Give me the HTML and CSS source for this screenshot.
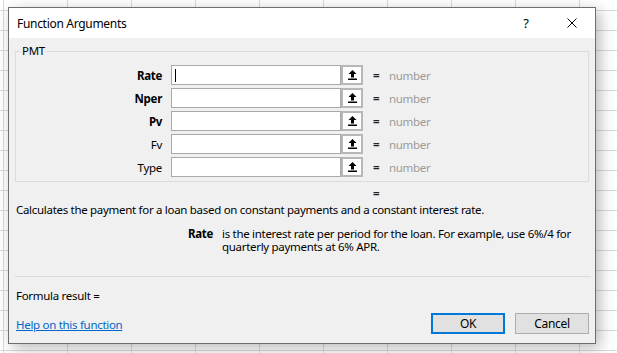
FILE: index.html
```html
<!DOCTYPE html>
<html>
<head>
<meta charset="utf-8">
<title>Function Arguments</title>
<link rel="stylesheet" href="styles.css">
</head>
<body>
<div class="dialog">
  <div class="titlebar">
    <span class="title">Function Arguments</span>
    <span class="tb-btn help">?</span>
    <span class="tb-btn close">
      <svg width="10" height="10" viewBox="0 0 10 10"><path d="M0.5 0.5L9.5 9.5M9.5 0.5L0.5 9.5" stroke="#000" stroke-width="1" fill="none"/></svg>
    </span>
  </div>
  <div class="body">
    <div class="group">
      <span class="legend">PMT</span>
      <div class="row">
        <span class="label bold">Rate</span>
        <span class="input"><span class="caret"></span></span>
        <span class="refbtn"><svg width="9" height="10" viewBox="0 0 9 10"><path d="M4.5 0L8.5 4H6V7.5H3V4H0.5Z" fill="#000"/><rect x="0" y="8.5" width="9" height="1.5" fill="#000"/></svg></span>
        <span class="eq">=</span>
        <span class="val">number</span>
      </div>
      <div class="row">
        <span class="label bold">Nper</span>
        <span class="input"></span>
        <span class="refbtn"><svg width="9" height="10" viewBox="0 0 9 10"><path d="M4.5 0L8.5 4H6V7.5H3V4H0.5Z" fill="#000"/><rect x="0" y="8.5" width="9" height="1.5" fill="#000"/></svg></span>
        <span class="eq">=</span>
        <span class="val">number</span>
      </div>
      <div class="row">
        <span class="label bold">Pv</span>
        <span class="input"></span>
        <span class="refbtn"><svg width="9" height="10" viewBox="0 0 9 10"><path d="M4.5 0L8.5 4H6V7.5H3V4H0.5Z" fill="#000"/><rect x="0" y="8.5" width="9" height="1.5" fill="#000"/></svg></span>
        <span class="eq">=</span>
        <span class="val">number</span>
      </div>
      <div class="row">
        <span class="label">Fv</span>
        <span class="input"></span>
        <span class="refbtn"><svg width="9" height="10" viewBox="0 0 9 10"><path d="M4.5 0L8.5 4H6V7.5H3V4H0.5Z" fill="#000"/><rect x="0" y="8.5" width="9" height="1.5" fill="#000"/></svg></span>
        <span class="eq">=</span>
        <span class="val">number</span>
      </div>
      <div class="row">
        <span class="label">Type</span>
        <span class="input"></span>
        <span class="refbtn"><svg width="9" height="10" viewBox="0 0 9 10"><path d="M4.5 0L8.5 4H6V7.5H3V4H0.5Z" fill="#000"/><rect x="0" y="8.5" width="9" height="1.5" fill="#000"/></svg></span>
        <span class="eq">=</span>
        <span class="val">number</span>
      </div>
    </div>
    <div class="result-eq">=</div>
    <div class="desc">Calculates the payment for a loan based on constant payments and a constant interest rate.</div>
    <div class="argdesc">
      <span class="argname">Rate</span>
      <span class="argtext">is the interest rate per period for the loan. For example, use 6%/4 for<br>quarterly payments at 6% APR.</span>
    </div>
    <div class="sep"></div>
    <div class="formula">Formula result =</div>
    <div class="footer">
      <a class="link" href="#">Help on this function</a>
      <div class="buttons">
        <span class="btn default">OK</span>
        <span class="btn">Cancel</span>
      </div>
    </div>
  </div>
</div>
</body>
</html>
```
FILE: styles.css
```css
html, body {
  margin: 0;
  padding: 0;
}
body {
  width: 617px;
  height: 353px;
  overflow: hidden;
  background-color: #fff;
  background-image:
    linear-gradient(to right, #d9d9d9 1px, transparent 1px),
    linear-gradient(to bottom, #d9d9d9 1px, transparent 1px);
  background-size: 64px 20px;
  background-position: 3px 10px;
  font-family: "Noto Sans", "Open Sans", sans-serif;
  font-size: 11.5px;
  letter-spacing: -0.3px;
  color: #000;
}
.dialog {
  box-sizing: border-box;
  margin: 7px 0 0 8px;
  width: 588px;
  height: 337px;
  border: 1px solid #6e6e6e;
  background: #f0f0f0;
  box-shadow: 4px 4px 14px rgba(0, 0, 0, 0.28);
  display: flex;
  flex-direction: column;
}
.titlebar {
  height: 30px;
  background: #fff;
  display: flex;
  align-items: center;
  padding-left: 8px;
  flex-shrink: 0;
}
.title {
  flex: 1;
  font-size: 12px;
  letter-spacing: -0.3px;
}
.tb-btn {
  width: 46px;
  height: 30px;
  display: flex;
  align-items: center;
  justify-content: center;
}
.help {
  font-size: 13px;
}
.close svg {
  display: block;
}
.body {
  flex: 1;
  padding: 13px 6px 0 6px;
  display: flex;
  flex-direction: column;
}
.group {
  position: relative;
  border: 1px solid #dcdcdc;
  height: 116px;
  box-sizing: content-box;
  padding: 13px 0 0 0;
  display: flex;
  flex-direction: column;
  gap: 3px;
  flex-shrink: 0;
}
.legend {
  position: absolute;
  top: -9px;
  left: 5px;
  padding: 0 1px;
  background: #f0f0f0;
  line-height: 16px;
}
.row {
  display: flex;
  align-items: center;
  height: 20px;
}
.label {
  width: 146px;
  text-align: right;
  margin-right: 9px;
}
.bold {
  font-weight: bold;
}
.input {
  box-sizing: border-box;
  width: 170px;
  height: 20px;
  border: 1px solid #a9a9a9;
  background: #fff;
  display: flex;
  align-items: center;
  padding-left: 3px;
}
.caret {
  width: 1px;
  height: 13px;
  background: #000;
}
.refbtn {
  box-sizing: border-box;
  width: 22px;
  height: 20px;
  border: 2px solid #b7b7b7;
  background: #fff;
  display: flex;
  align-items: center;
  justify-content: center;
}
.refbtn svg {
  display: block;
}
.eq {
  margin-left: 10px;
  width: 16px;
  font-weight: bold;
  color: #222;
}
.val {
  color: #9b9b9b;
}
.result-eq {
  margin-top: 4px;
  padding-left: 358px;
  line-height: 16px;
  height: 16px;
  font-weight: bold;
  color: #222;
}
.desc {
  padding-left: 1px;
  line-height: 16px;
}
.argdesc {
  margin-top: 9px;
  display: flex;
  line-height: 13px;
}
.argname {
  width: 198px;
  text-align: right;
  font-weight: bold;
  margin-right: 9px;
  flex-shrink: 0;
}
.sep {
  margin-top: 23px;
  height: 1px;
  background: #dcdcdc;
  margin-right: -2px;
}
.formula {
  margin-top: 11px;
  padding-left: 1px;
  line-height: 16px;
}
.footer {
  margin-top: 9px;
  display: flex;
  align-items: center;
  justify-content: space-between;
}
.link {
  padding-left: 1px;
  margin-top: 3px;
  color: #0066cc;
  text-decoration: underline;
  line-height: 16px;
}
.buttons {
  display: flex;
  gap: 10px;
}
.btn {
  box-sizing: border-box;
  width: 74px;
  height: 21px;
  border: 1px solid #adadad;
  background: #e1e1e1;
  display: flex;
  align-items: center;
  justify-content: center;
  font-size: 12px;
}
.btn.default {
  border: 2px solid #0078d7;
}
```
